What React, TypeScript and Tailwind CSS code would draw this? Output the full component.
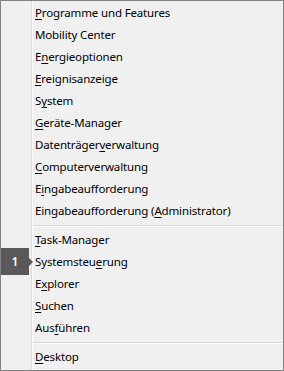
import React from 'react';

type Item = { label: string; key?: number };

// key = index of the underlined access-key letter
const GROUP1: Item[] = [
  { label: 'Programme und Features', key: 0 },
  { label: 'Mobility Center' },
  { label: 'Energieoptionen', key: 1 },
  { label: 'Ereignisanzeige', key: 0 },
  { label: 'System', key: 1 },
  { label: 'Geräte-Manager', key: 0 },
  { label: 'Datenträgerverwaltung', key: 11 },
  { label: 'Computerverwaltung', key: 0 },
  { label: 'Eingabeaufforderung', key: 1 },
  { label: 'Eingabeaufforderung (Administrator)', key: 21 },
];

const GROUP2: Item[] = [
  { label: 'Task-Manager', key: 0 },
  { label: 'Systemsteuerung', key: 10 },
  { label: 'Explorer', key: 1 },
  { label: 'Suchen', key: 0 },
  { label: 'Ausführen', key: 3 },
];

function Label({ item }: { item: Item }) {
  if (item.key === undefined) return <>{item.label}</>;
  const i = item.key;
  return (
    <>
      {item.label.slice(0, i)}
      <span className="underline underline-offset-[2px]">{item.label[i]}</span>
      {item.label.slice(i + 1)}
    </>
  );
}

function Row({ item, badge }: { item: Item; badge?: boolean }) {
  return (
    <div className="relative h-[22px] pl-[2px] leading-[22px] whitespace-nowrap">
      {badge && (
        <div className="absolute left-[-32px] top-[-3px] flex items-center tracking-normal">
          <div className="flex h-[27px] w-[28px] items-center justify-center bg-[#595959] text-[12px] font-semibold text-white">
            1
          </div>
          <div className="h-0 w-0 border-y-[4px] border-l-[4px] border-y-transparent border-l-[#595959]" />
        </div>
      )}
      <Label item={item} />
    </div>
  );
}

function Separator() {
  return (
    <div className="h-[7px] pt-[3px]">
      <div className="h-px bg-[#d7d7d7]" />
      <div className="h-px bg-white" />
    </div>
  );
}

export default function App() {
  return (
    <div
      className="flex h-[371px] w-[284px] border border-[#828282] bg-[#f0f0f0] text-[11.5px] tracking-[-0.15px] text-black"
      style={{ fontFamily: '"Segoe UI", "Noto Sans", sans-serif' }}
    >
      <div className="w-[30px] shrink-0" />
      <div className="w-px bg-[#dcdcdc]" />
      <div className="w-px bg-white" />
      <div className="flex-1 pt-px">
        {GROUP1.map((it) => (
          <Row key={it.label} item={it} />
        ))}
        <Separator />
        {GROUP2.map((it) => (
          <Row key={it.label} item={it} badge={it.label === 'Systemsteuerung'} />
        ))}
        <Separator />
        <Row item={{ label: 'Desktop', key: 0 }} />
      </div>
    </div>
  );
}
